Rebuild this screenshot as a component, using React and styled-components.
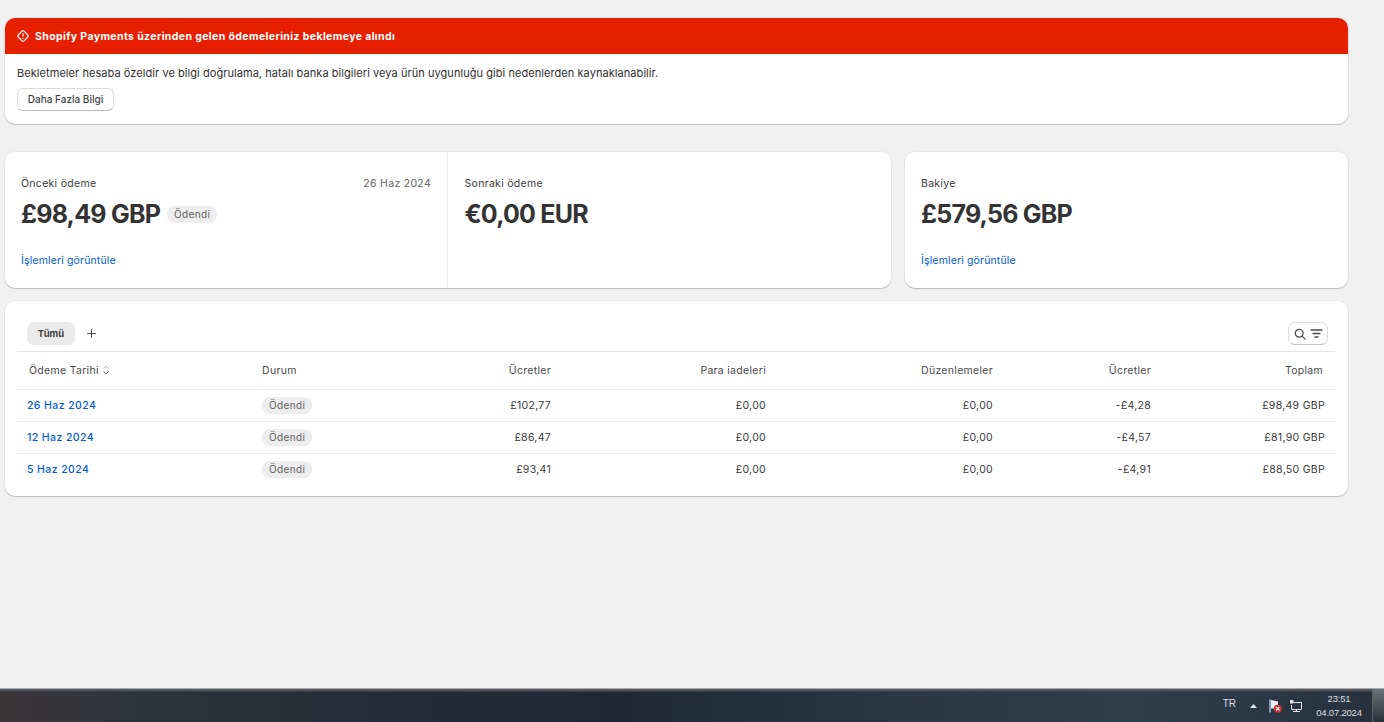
import React from 'react';
import styled, { createGlobalStyle } from 'styled-components';

const payouts = [
  { date: '26 Haz 2024', fees: '£102,77', charge: '-£4,28', total: '£98,49 GBP' },
  { date: '12 Haz 2024', fees: '£86,47', charge: '-£4,57', total: '£81,90 GBP' },
  { date: '5 Haz 2024', fees: '£93,41', charge: '-£4,91', total: '£88,50 GBP' },
];

const GlobalStyle = createGlobalStyle`
  html, body { margin: 0; padding: 0; height: 100%; }
  body {
    background: #f1f1f1;
    color: #303030;
    font-family: Inter, "Noto Sans", "Liberation Sans", sans-serif;
    font-size: 11px;
    overflow: hidden;
  }
`;

const Screen = styled.div`
  height: 722px;
  display: flex;
  flex-direction: column;
`;

const Page = styled.main`
  flex: 1;
  width: 1343px;
  margin-left: 4.5px;
  padding-top: 18px;
  display: flex;
  flex-direction: column;
`;

const Card = styled.section`
  background: #fff;
  border-radius: 10px;
  box-shadow: 0 1px 1px rgba(0, 0, 0, 0.2), 0 0 0 1px rgba(0, 0, 0, 0.03);
  overflow: hidden;
`;

const AlertHeader = styled.div`
  height: 36px;
  background: #e61f00;
  color: #fff;
  font-size: 10.5px;
  font-weight: 700;
  letter-spacing: 0.38px;
  display: flex;
  align-items: center;
  gap: 5px;
  padding-left: 11.5px;
`;

const AlertBody = styled.div`
  height: 70px;
  padding: 12px 12.5px 0;
  box-sizing: border-box;
  font-size: 11px;
  line-height: 14px;
  letter-spacing: 0.06px;
`;

const OutlineButton = styled.button`
  display: block;
  margin-top: 8px;
  height: 23px;
  width: 97px;
  padding: 0 0 1px;
  background: #fff;
  border: 1px solid #dcdcdc;
  border-bottom-color: #bbb;
  border-radius: 6px;
  font: 500 10px Inter, sans-serif;
  color: #3f3f3f;
`;

const SummaryRow = styled.div`
  margin-top: 28px;
  display: grid;
  grid-template-columns: 886.5px 442.5px;
  gap: 14px;
  height: 135.5px;
`;

const SplitCard = styled(Card)`
  display: grid;
  grid-template-columns: 443.5px 1fr;
`;

const Stat = styled.div`
  padding: 25px 16px 0 ${(p) => (p.$inset ? 16.5 : 16)}px;
  box-sizing: border-box;
  height: 136px;
  display: flex;
  flex-direction: column;
  ${(p) => p.$divided && 'border-right: 1px solid #ebebeb;'}
`;

const StatTop = styled.div`
  height: 13px;
  line-height: 13px;
  display: flex;
  justify-content: space-between;
  font-size: 10.5px;
  letter-spacing: 0.3px;
  color: #3a3a3a;
`;

const StatDate = styled.span`
  color: #616161;
`;

const StatValue = styled.div`
  margin-top: 9px;
  height: 30px;
  display: flex;
  align-items: center;
  gap: 7px;
  font-size: 25px;
  font-weight: 700;
  letter-spacing: -0.78px;
  color: #333;
`;

const Badge = styled.span`
  height: 17px;
  line-height: 16px;
  padding: 0 7px;
  border-radius: 8px;
  background: #ededed;
  color: #616161;
  font-size: 10px;
  font-weight: 400;
  letter-spacing: 0.35px;
  display: inline-block;
`;

const StatLink = styled.a`
  margin-top: 25px;
  font-size: 10.5px;
  line-height: 14px;
  letter-spacing: 0.15px;
  color: #005bd3;
`;

const TableCard = styled(Card)`
  margin-top: 13.5px;
  height: 195px;
  padding: 0 12.5px;
`;

const Toolbar = styled.div`
  height: 50.5px;
  box-sizing: border-box;
  padding: 21px 7px 0 10px;
  display: flex;
  align-items: flex-start;
  border-bottom: 1px solid #e3e3e3;
`;

const Tab = styled.div`
  width: 48px;
  height: 23px;
  line-height: 23px;
  text-align: center;
  border-radius: 7px;
  background: #ebebeb;
  color: #3f3f3f;
  font-size: 9.5px;
  font-weight: 700;
`;

const AddTab = styled.div`
  width: 33px;
  height: 23px;
  display: flex;
  align-items: center;
  justify-content: center;
`;

const FilterButton = styled.div`
  margin-left: auto;
  width: 40px;
  height: 23px;
  box-sizing: border-box;
  border: 1px solid #dedede;
  border-bottom-color: #c4c4c4;
  border-radius: 7px;
  display: flex;
  align-items: center;
  justify-content: center;
  gap: 3px;
`;

const Row = styled.div`
  display: grid;
  grid-template-columns: 235px 138px 151px 215px 227px 158px 174px;
  padding: 0 10px;
  align-items: center;
  height: ${(p) => (p.$head ? 38 : 32)}px;
  box-sizing: border-box;
  border-bottom: ${(p) => (p.$last ? 'none' : '1px solid #ebebeb')};
  font-size: 10.5px;
  letter-spacing: 0.3px;
`;

const HeadCell = styled.div`
  color: #4a4a4a;
  display: flex;
  align-items: center;
  gap: 3px;
  justify-content: ${(p) => (p.$right ? 'flex-end' : 'flex-start')};
  padding-left: ${(p) => (p.$first ? 2 : 0)}px;
  padding-right: ${(p) => (p.$end ? 2 : 0)}px;
`;

const NumCell = styled.div`
  text-align: right;
  color: #3a3a3a;
`;

const DateLink = styled.a`
  color: #005bd3;
  font-weight: 500;
  letter-spacing: 0.4px;
`;

const Taskbar = styled.footer`
  height: 34px;
  flex-shrink: 0;
  box-sizing: border-box;
  border-top: 1px solid #a9abb0;
  background:
    linear-gradient(#565b62 0, #4a5058 2px, transparent 3px),
    linear-gradient(90deg, #3a3537 0, #2d333b 150px, #222c37 400px, #1e2935 620px, #2a3644 900px, #2f3e4d 1130px, #26313c 1384px);
  display: flex;
  align-items: center;
  justify-content: flex-end;
  color: #dcdee0;
  font-family: "Liberation Sans", Arial, sans-serif;
`;

const Lang = styled.span`
  font-size: 10px;
  margin-right: 14px;
  margin-bottom: 5px;
`;

const Clock = styled.div`
  margin-left: 12px;
  width: 48px;
  text-align: center;
  font-size: 9.5px;
  line-height: 14px;
  letter-spacing: -0.2px;
`;

const ShowDesktop = styled.div`
  margin-left: 9px;
  width: 12px;
  height: 33px;
  box-sizing: border-box;
  border-left: 1px solid #5a6168;
  background: linear-gradient(#6a7178, #2a333c);
`;

const TrayIcon = styled.svg`
  display: block;
  margin-right: ${(p) => p.$gap || 0}px;
`;

const AlertIcon = () => (
  <svg width="14" height="14" viewBox="0 0 14 14" fill="none" stroke="#fff" strokeWidth="1.2">
    <rect x="2.9" y="2.9" width="8.2" height="8.2" rx="1.4" transform="rotate(45 7 7)" />
    <path d="M7 4.2v3.2M7 8.8v1" />
  </svg>
);

const PlusIcon = () => (
  <svg width="11" height="11" viewBox="0 0 11 11" stroke="#4a4a4a" strokeWidth="1.1">
    <path d="M5.5 1.2v8.6M1.2 5.5h8.6" />
  </svg>
);

const SearchIcon = () => (
  <svg width="14" height="14" viewBox="0 0 14 14" fill="none" stroke="#4a4a4a" strokeWidth="1.3">
    <circle cx="6.2" cy="6.2" r="3.9" />
    <path d="M9.1 9.1l3 3" strokeLinecap="round" />
  </svg>
);

const FilterIcon = () => (
  <svg width="13" height="13" viewBox="0 0 13 13" fill="none" stroke="#4a4a4a" strokeWidth="1.3" strokeLinecap="round">
    <path d="M1 3h11M3 6.5h7M5 10h3" />
  </svg>
);

const SortIcon = () => (
  <svg width="8" height="10" viewBox="0 0 8 10" fill="none" stroke="#5a5a5a" strokeWidth="1">
    <path d="M1.5 3.5L4 1.2l2.5 2.3" stroke="#b5b5b5" />
    <path d="M1.5 6.5L4 8.8l2.5-2.3" />
  </svg>
);

const Tray = () => (
  <>
    <TrayIcon $gap={11} width="7" height="4" viewBox="0 0 7 4">
      <path d="M3.5 0L7 4H0z" fill="#e6e8ea" />
    </TrayIcon>
    <TrayIcon $gap={7} width="14" height="14" viewBox="0 0 14 14">
      <path d="M2 0.5v13" stroke="#8fb4e0" strokeWidth="1.6" />
      <path d="M3 1l7 1.5v7H3z" fill="#eceef2" />
      <circle cx="9.8" cy="9.8" r="4" fill="#c8353a" />
      <path d="M8.2 8.2l3.2 3.2M11.4 8.2l-3.2 3.2" stroke="#fff" strokeWidth="1.1" />
    </TrayIcon>
    <TrayIcon width="14" height="14" viewBox="0 0 14 14" fill="none" stroke="#dfe3e8">
      <path d="M4.5 3.5h8v7h-10V6" />
      <path d="M7.5 10.5v2M4 12.5h7" />
      <rect x="1" y="1" width="3.5" height="3.5" fill="#dfe3e8" stroke="none" />
    </TrayIcon>
  </>
);

export default function App() {
  return (
    <Screen>
      <GlobalStyle />
      <Page>
        <Card>
          <AlertHeader>
            <AlertIcon />
            Shopify Payments üzerinden gelen ödemeleriniz beklemeye alındı
          </AlertHeader>
          <AlertBody>
            Bekletmeler hesaba özeldir ve bilgi doğrulama, hatalı banka bilgileri veya ürün uygunluğu gibi nedenlerden kaynaklanabilir.
            <OutlineButton>Daha Fazla Bilgi</OutlineButton>
          </AlertBody>
        </Card>

        <SummaryRow>
          <SplitCard>
            <Stat $divided $inset>
              <StatTop>
                <span>Önceki ödeme</span>
                <StatDate>26 Haz 2024</StatDate>
              </StatTop>
              <StatValue>
                £98,49 GBP
                <Badge>Ödendi</Badge>
              </StatValue>
              <StatLink>İşlemleri görüntüle</StatLink>
            </Stat>
            <Stat $inset>
              <StatTop>
                <span>Sonraki ödeme</span>
              </StatTop>
              <StatValue>€0,00 EUR</StatValue>
            </Stat>
          </SplitCard>
          <Card>
            <Stat>
              <StatTop>
                <span>Bakiye</span>
              </StatTop>
              <StatValue>£579,56 GBP</StatValue>
              <StatLink>İşlemleri görüntüle</StatLink>
            </Stat>
          </Card>
        </SummaryRow>

        <TableCard>
          <Toolbar>
            <Tab>Tümü</Tab>
            <AddTab>
              <PlusIcon />
            </AddTab>
            <FilterButton>
              <SearchIcon />
              <FilterIcon />
            </FilterButton>
          </Toolbar>
          <Row $head>
            <HeadCell $first>
              Ödeme Tarihi <SortIcon />
            </HeadCell>
            <HeadCell>Durum</HeadCell>
            <HeadCell $right>Ücretler</HeadCell>
            <HeadCell $right>Para iadeleri</HeadCell>
            <HeadCell $right>Düzenlemeler</HeadCell>
            <HeadCell $right>Ücretler</HeadCell>
            <HeadCell $right $end>Toplam</HeadCell>
          </Row>
          {payouts.map((p, i) => (
            <Row key={p.date} $last={i === payouts.length - 1}>
              <div>
                <DateLink>{p.date}</DateLink>
              </div>
              <div>
                <Badge>Ödendi</Badge>
              </div>
              <NumCell>{p.fees}</NumCell>
              <NumCell>£0,00</NumCell>
              <NumCell>£0,00</NumCell>
              <NumCell>{p.charge}</NumCell>
              <NumCell>{p.total}</NumCell>
            </Row>
          ))}
        </TableCard>
      </Page>
      <Taskbar>
        <Lang>TR</Lang>
        <Tray />
        <Clock>
          23:51
          <br />
          04.07.2024
        </Clock>
        <ShowDesktop />
      </Taskbar>
    </Screen>
  );
}
